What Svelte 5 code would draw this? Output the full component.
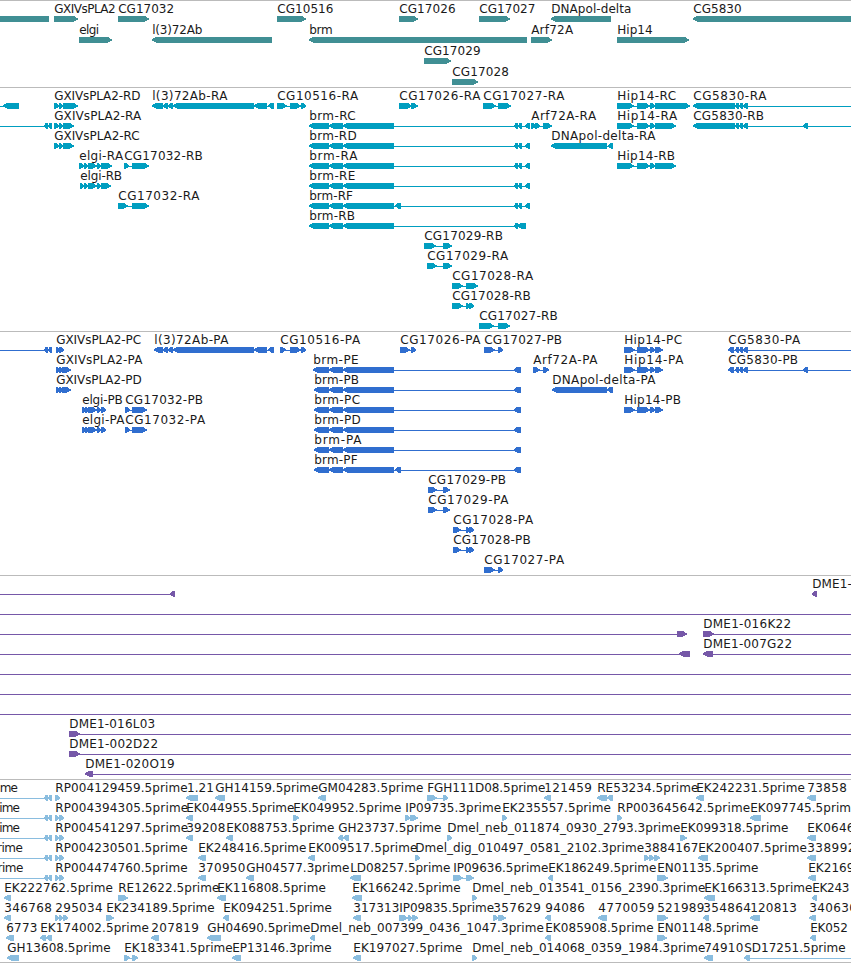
<script lang="ts">
	type Exon = [number, number];

	interface Feature {
		row: number;
		dir: 'L' | 'R' | '-';
		label: string;
		end: number; // right edge of the label
		exons: Exon[];
		span?: Exon; // backbone, when it runs past the exons
		labelX?: number;
	}

	interface Track {
		name: string;
		height: number;
		pitch: number;
		features: Feature[];
	}

	const WIDTH = 851;

	function f(row: number, dir: Feature['dir'], label: string, end: number, exons: Exon[], span?: Exon, labelX?: number): Feature {
		return { row, dir, label, end, exons, span, labelX };
	}

	const brm: Exon[] = [[309, 329], [329, 343], [343, 394], [514, 518], [518, 522], [525, 530]];
	const brmCds: Exon[] = [[314, 329], [329, 343], [343, 394], [514, 519], [517, 521]];
	const hip: Exon[] = [[617, 634], [637, 650], [650, 655], [655, 676]];
	const hipCds: Exon[] = [[624, 635], [637, 650], [650, 655], [655, 663]];
	const upstream: Exon[] = [[44, 48], [48, 52]];

	const tracks: Track[] = [
		{
			name: 'gene',
			height: 87,
			pitch: 21,
			features: [
				f(0, 'L', '', 0, [[-20, 49]]),
				f(0, 'R', 'GXIVsPLA2', 115.3, [[54, 78]]),
				f(0, 'R', 'CG17032', 173.7, [[118, 149]]),
				f(0, 'R', 'CG10516', 333, [[277, 306]]),
				f(0, 'R', 'CG17026', 455.3, [[399, 418]]),
				f(0, 'R', 'CG17027', 535, [[479, 510]]),
				f(0, 'L', 'DNApol-delta', 631, [[551, 611]]),
				f(0, 'L', 'CG5830', 741.3, [[693, 870]]),
				f(1, 'R', 'elgi', 98.7, [[79, 112]]),
				f(1, 'L', 'l(3)72Ab', 202, [[152, 272]]),
				f(1, 'L', 'brm', 332.3, [[309, 527]]),
				f(1, 'R', 'Arf72A', 572.7, [[531, 552]]),
				f(1, 'R', 'Hip14', 652.3, [[617, 689]]),
				f(2, 'R', 'CG17029', 480.3, [[424, 451]]),
				f(3, 'R', 'CG17028', 508.5, [[452, 478]])
			]
		},
		{
			name: 'transcript',
			height: 244,
			pitch: 20,
			features: [
				f(0, 'L', '', 0, [[3, 19]], [-5, 19]),
				f(0, 'R', 'GXIVsPLA2-RD', 140, [[54, 59], [59, 63], [63, 78]]),
				f(0, 'L', 'l(3)72Ab-RA', 227, [[152, 163], [163, 168], [168, 173], [173, 254], [254, 267], [268, 274]]),
				f(0, 'R', 'CG10516-RA', 357.7, [[277, 287], [290, 301], [301, 306]]),
				f(0, 'R', 'CG17026-RA', 480, [[399, 412], [411, 418]]),
				f(0, 'R', 'CG17027-RA', 564, [[483, 496], [498, 511]]),
				f(0, 'R', 'Hip14-RC', 675.7, [[617, 634], [637, 650], [650, 655], [655, 690]]),
				f(0, 'L', 'CG5830-RA', 766, [[693, 735], [735, 739], [739, 743], [743, 748]], [693, 860]),
				f(1, 'L', '', 0, upstream, [-5, 52]),
				f(1, 'R', 'GXIVsPLA2-RA', 140.7, [[54, 59], [59, 63], [63, 74]]),
				f(1, 'L', 'brm-RC', 355.3, brm),
				f(1, 'R', 'Arf72A-RA', 595.7, [[531, 536], [535, 540], [543, 552]]),
				f(1, 'R', 'Hip14-RA', 676.7, hip),
				f(1, 'L', 'CG5830-RB', 763.7, [[693, 735], [735, 739], [739, 743], [743, 748], [803, 808]], [693, 860]),
				f(2, 'R', 'GXIVsPLA2-RC', 139.3, [[54, 59], [59, 63], [63, 74]]),
				f(2, 'L', 'brm-RD', 356.3, brm),
				f(2, 'L', 'DNApol-delta-RA', 655, [[551, 607], [608, 613]]),
				f(3, 'R', 'elgi-RA', 122.7, [[79, 84], [84, 88], [88, 97], [97, 101], [101, 112]]),
				f(3, 'R', 'CG17032-RB', 202.3, [[124, 129], [132, 149]]),
				f(3, 'L', 'brm-RA', 357, brm),
				f(3, 'R', 'Hip14-RB', 674.7, hip),
				f(4, 'R', 'elgi-RB', 121.7, [[80, 84], [84, 88], [88, 97], [97, 101], [101, 111]]),
				f(4, 'L', 'brm-RE', 355, brm),
				f(5, 'R', 'CG17032-RA', 199, [[118, 128], [132, 149]]),
				f(5, 'L', 'brm-RF', 352.5, [...brm, [395, 401]]),
				f(6, 'L', 'brm-RB', 354.5, [[309, 329], [329, 343], [343, 394], [514, 518], [517, 526]]),
				f(7, 'R', 'CG17029-RB', 502.5, [[424, 436], [443, 452]]),
				f(8, 'R', 'CG17029-RA', 507.7, [[427, 437], [443, 452]]),
				f(9, 'R', 'CG17028-RA', 532.7, [[452, 463], [466, 470], [468, 478]]),
				f(10, 'R', 'CG17028-RB', 530.3, [[452, 463], [466, 470], [469, 474]]),
				f(11, 'R', 'CG17027-RB', 557.3, [[479, 494], [498, 510]])
			]
		},
		{
			name: 'cds',
			height: 244,
			pitch: 20,
			features: [
				f(0, 'L', '', 0, upstream, [-5, 52]),
				f(0, 'R', 'GXIVsPLA2-PC', 140.7, [[56, 60], [59, 64]]),
				f(0, 'L', 'l(3)72Ab-PA', 228, [[154, 163], [163, 168], [168, 173], [173, 254], [254, 267], [268, 274]]),
				f(0, 'R', 'CG10516-PA', 359.7, [[280, 286], [290, 301], [301, 306]]),
				f(0, 'R', 'CG17026-PA', 480, [[400, 410], [411, 416]]),
				f(0, 'R', 'CG17027-PB', 561.7, [[484, 495], [498, 503]]),
				f(0, 'R', 'Hip14-PC', 681.7, hipCds),
				f(0, 'L', 'CG5830-PA', 799.7, [[728, 734], [735, 739], [739, 743], [743, 748]], [728, 860]),
				f(1, 'R', 'GXIVsPLA2-PA', 142, [[56, 60], [59, 63], [62, 71]]),
				f(1, 'L', 'brm-PE', 358.3, [[313, 329], ...brmCds.slice(1)]),
				f(1, 'R', 'Arf72A-PA', 597, [[533, 540], [543, 549]]),
				f(1, 'R', 'Hip14-PA', 683, hipCds),
				f(1, 'L', 'CG5830-PB', 797.7, [[728, 734], [735, 739], [739, 743], [743, 748], [803, 808]], [728, 860]),
				f(2, 'R', 'GXIVsPLA2-PD', 141.3, [[56, 60], [59, 63], [62, 71]]),
				f(2, 'L', 'brm-PB', 358.7, brmCds),
				f(2, 'L', 'DNApol-delta-PA', 655, [[552, 607], [607, 613]]),
				f(3, 'R', 'elgi-PB', 122.3, [[82, 86], [85, 89], [88, 97], [97, 101], [101, 106]]),
				f(3, 'R', 'CG17032-PB', 202.7, [[125, 130], [132, 147]]),
				f(3, 'L', 'brm-PC', 359.7, brmCds),
				f(3, 'R', 'Hip14-PB', 680.7, hipCds),
				f(4, 'R', 'elgi-PA', 124, [[82, 86], [85, 89], [88, 97], [97, 101], [101, 106]]),
				f(4, 'R', 'CG17032-PA', 204.7, [[125, 130], [132, 147]]),
				f(4, 'L', 'brm-PD', 360.3, brmCds),
				f(5, 'L', 'brm-PA', 361, brmCds),
				f(6, 'L', 'brm-PF', 357.3, [...brmCds, [395, 401]]),
				f(7, 'R', 'CG17029-PB', 505.7, [[428, 437], [443, 450]]),
				f(8, 'R', 'CG17029-PA', 508, [[428, 437], [443, 450]]),
				f(9, 'R', 'CG17028-PA', 532.7, [[453, 461], [466, 470], [469, 474]]),
				f(10, 'R', 'CG17028-PB', 530.3, [[453, 461], [466, 470], [469, 474]]),
				f(11, 'R', 'CG17027-PA', 563.7, [[484, 495], [498, 503]])
			]
		},
		{
			name: 'bac',
			height: 204,
			pitch: 20,
			features: [
				f(0, 'L', '', 0, [[170, 175]], [-5, 175]),
				f(0, 'L', 'DME1-', 851.5, [[812, 817]]),
				f(1, '-', '', 0, [], [-5, 860]),
				f(2, 'R', '', 0, [[677, 687]], [-5, 687]),
				f(2, 'R', 'DME1-016K22', 790.7, [[703, 714]], [703, 860]),
				f(3, 'L', '', 0, [[679, 690]], [-5, 690]),
				f(3, 'L', 'DME1-007G22', 791.7, [[703, 713]], [703, 860]),
				f(4, '-', '', 0, [], [-5, 860]),
				f(5, '-', '', 0, [], [-5, 860]),
				f(6, '-', '', 0, [], [-5, 860]),
				f(7, 'R', 'DME1-016L03', 154.7, [[69, 80]], [69, 860]),
				f(8, 'R', 'DME1-002D22', 157.7, [[69, 80]], [69, 860]),
				f(9, 'L', 'DME1-020O19', 174.3, [[85, 93]], [85, 860])
			]
		},
		{
			name: 'est',
			height: 183,
			pitch: 20,
			features: [
				f(0, 'L', 'me', 17.5, upstream, [-5, 52], -0.3),
				f(0, 'R', 'RP004129459.5prime', 187.3, [[55, 60]]),
				f(0, 'L', '1.21', 213.5, [[186, 198]], undefined, 187),
				f(0, 'L', 'GH14159.5prime', 318, [[215, 225]]),
				f(0, 'L', 'GM04283.5prime', 423, [[318, 326]]),
				f(0, 'R', 'FGH111D08.5prime', 545, [[427, 437], [443, 448]]),
				f(0, 'L', '121459', 591.5, [[544, 551]]),
				f(0, 'L', 'RE53234.5prime', 698, [[597, 607], [607, 613]]),
				f(0, 'L', 'EK242231.5prime', 804.5, [[696, 704]]),
				f(0, 'L', '73858', 846.5, [[807, 816]]),
				f(1, 'L', 'ime', 19.5, upstream, [-5, 52], -0.8),
				f(1, 'R', 'RP004394305.5prime', 187.7, [[55, 59], [59, 64]]),
				f(1, 'L', 'EK044955.5prime', 294, [[186, 193]]),
				f(1, 'R', 'EK049952.5prime', 401, [[293, 299]]),
				f(1, 'R', 'IP09735.3prime', 500.7, [[405, 410], [410, 418]]),
				f(1, 'R', 'EK235557.5prime', 610.5, [[502, 507]]),
				f(1, 'R', 'RP003645642.5prime', 749.7, [[617, 622]]),
				f(1, 'L', 'EK097745.5prime', 858, [[750, 761]]),
				f(2, 'L', 'ime', 19.5, upstream, [-5, 52], -0.8),
				f(2, 'R', 'RP004541297.5prime', 187.7, [[55, 59], [59, 64]]),
				f(2, 'L', '39208', 225, [[186, 193]]),
				f(2, 'L', 'EK088753.5prime', 334, [[226, 233]]),
				f(2, 'L', 'GH23737.5prime', 441, [[338, 343], [343, 349]]),
				f(2, 'R', 'Dmel_neb_011874_0930_2793.3prime', 680, [[447, 452]]),
				f(2, 'R', 'EK099318.5prime', 788, [[680, 687]]),
				f(2, 'L', 'EK0646', 854, [[807, 816]]),
				f(3, 'L', 'rime', 22.5, upstream, [-5, 52], -3),
				f(3, 'R', 'RP004230501.5prime', 187.3, [[55, 59], [59, 64]]),
				f(3, 'L', 'EK248416.5prime', 306, [[198, 206]]),
				f(3, 'L', 'EK009517.5prime', 417, [[308, 315]]),
				f(3, 'R', 'Dmel_dig_010497_0581_2102.3prime', 643.7, [[415, 420]]),
				f(3, 'R', '3884167', 698, [[644, 649], [649, 654], [654, 660]]),
				f(3, 'L', 'EK200407.5prime', 806.5, [[698, 708]]),
				f(3, 'L', '338992', 855, [[807, 816]]),
				f(4, 'L', 'rime', 23, upstream, [-5, 52], -2.5),
				f(4, 'R', 'RP004474760.5prime', 187.3, [[55, 59], [59, 64]]),
				f(4, 'L', '370950', 245, [[198, 206]]),
				f(4, 'L', 'GH04577.3prime', 349, [[246, 254]]),
				f(4, 'L', 'LD08257.5prime', 450, [[350, 361]]),
				f(4, 'R', 'IP09636.5prime', 548, [[453, 463], [466, 474]]),
				f(4, 'L', 'EK186249.5prime', 656, [[548, 553]]),
				f(4, 'R', 'EN01135.5prime', 758, [[657, 668]]),
				f(4, 'L', 'EK2169', 854, [[808, 816]]),
				f(5, 'L', 'EK222762.5prime', 112.5, [[4, 11]]),
				f(5, 'R', 'RE12622.5prime', 219, [[118, 128]]),
				f(5, 'L', 'EK116808.5prime', 325.5, [[217, 226]]),
				f(5, 'L', 'EK166242.5prime', 460.3, [[352, 362]]),
				f(5, 'R', 'Dmel_neb_013541_0156_2390.3prime', 705, [[472, 477]]),
				f(5, 'L', 'EK166313.5prime', 812, [[704, 715]]),
				f(5, 'L', 'EK243', 849, [[812, 817]]),
				f(6, 'L', '346768', 51.5, [[4, 11]]),
				f(6, 'R', '295034', 102.3, [[55, 59], [59, 63], [63, 68]]),
				f(6, 'R', 'EK234189.5prime', 214.3, [[106, 114]]),
				f(6, 'L', 'EK094251.5prime', 331.5, [[223, 229]]),
				f(6, 'L', '317313', 399, [[353, 361]]),
				f(6, 'R', 'IP09835.5prime', 493.7, [[399, 408], [408, 412], [412, 418]]),
				f(6, 'R', '357629', 540.5, [[493, 498], [498, 506]]),
				f(6, 'L', '94086', 584.5, [[545, 551]]),
				f(6, 'L', '4770059', 654, [[598, 607]]),
				f(6, 'R', '521989', 704, [[657, 668]]),
				f(6, 'L', '354864', 750.5, [[703, 709]]),
				f(6, 'L', '120813', 796.5, [[750, 760]]),
				f(6, 'L', '340630', 856.5, [[809, 816]]),
				f(7, 'L', '6773', 37, [[6, 14]]),
				f(7, 'L', 'EK174002.5prime', 148.5, [[40, 46], [46, 52]]),
				f(7, 'L', '207819', 198.5, [[151, 159]]),
				f(7, 'L', 'GH04690.5prime', 310, [[207, 221]]),
				f(7, 'L', 'Dmel_neb_007399_0436_1047.3prime', 543.5, [[310, 315]]),
				f(7, 'L', 'EK085908.5prime', 653.3, [[545, 551]]),
				f(7, 'R', 'EN01148.5prime', 758, [[657, 667]]),
				f(7, 'L', 'EK052', 847.5, [[810, 816]]),
				f(8, 'L', 'GH13608.5prime', 110.3, [[7, 19]]),
				f(8, 'R', 'EK183341.5prime', 232.3, [[124, 130], [132, 138]]),
				f(8, 'L', 'EP13146.3prime', 331.3, [[232, 241]]),
				f(8, 'L', 'EK197027.5prime', 462, [[353, 361]]),
				f(8, 'R', 'Dmel_neb_014068_0359_1984.3prime', 705, [[472, 477]]),
				f(8, 'L', '74910', 743, [[704, 713]]),
				f(8, 'L', 'SD17251.5prime', 845.3, [[744, 750]], [744, 860])
			]
		}
	];

	function backbone(feature: Feature): Exon {
		if (feature.span) return feature.span;
		const xs = feature.exons.flat();
		return [Math.min(...xs), Math.max(...xs)];
	}

	// block with a pointed head on the 3' side, 6px tall
	function block([a, b]: Exon, dir: string): string {
		const head = Math.min(6, b - a - 1);
		if (dir === 'L') {
			return `${a - 0.3},18.8 ${a + head * 0.5},16.4 ${a + head},16 ${b},16 ${b},22 ${a + head},22 ${a + head * 0.5},21.2`;
		}
		return `${b + 0.3},18.8 ${b - head * 0.5},16.6 ${b - head},16 ${a},16 ${a},22 ${b - head},22 ${b - head * 0.5},21.2`;
	}

	function labelStart(feature: Feature): number {
		return feature.labelX ?? feature.exons[0][0] + 0.2;
	}
</script>

<main class="browser">
	{#each tracks as track}
		<section class="track {track.name}">
			<svg width={WIDTH} height={track.height - 1} viewBox="0 1 {WIDTH} {track.height - 1}">
				{#each track.features as feature}
					{@const [from, to] = backbone(feature)}
					<g transform="translate(0 {feature.row * track.pitch})">
						<rect class="shape" x={from} y="19" width={to - from} height="1" />
						{#each feature.exons as exon}
							<polygon class="shape" points={block(exon, feature.dir)} />
						{/each}
						{#if feature.label}
							<text x={labelStart(feature)} y="13" textLength={feature.end + 0.4 - labelStart(feature)}>{feature.label}</text>
						{/if}
					</g>
				{/each}
			</svg>
		</section>
	{/each}
</main>

<style>
	:global(body) {
		margin: 0;
		background: #fff;
	}

	.browser {
		display: flex;
		flex-direction: column;
		width: 851px;
		overflow: hidden;
		border-bottom: 1px solid #bbb;
	}

	.track {
		border-top: 1px solid #bbb;
	}

	svg {
		display: block;
		overflow: hidden;
	}

	text {
		font-family: 'DejaVu Sans', sans-serif;
		font-size: 12px;
		fill: #1a1a1a;
	}

	.shape {
		shape-rendering: crispEdges;
	}

	.gene {
		fill: #408f94;
	}

	.transcript {
		fill: #009ec0;
	}

	.cds {
		fill: #306ecf;
	}

	.bac {
		fill: #7658a8;
	}

	.est {
		fill: #8abddf;
	}
</style>
